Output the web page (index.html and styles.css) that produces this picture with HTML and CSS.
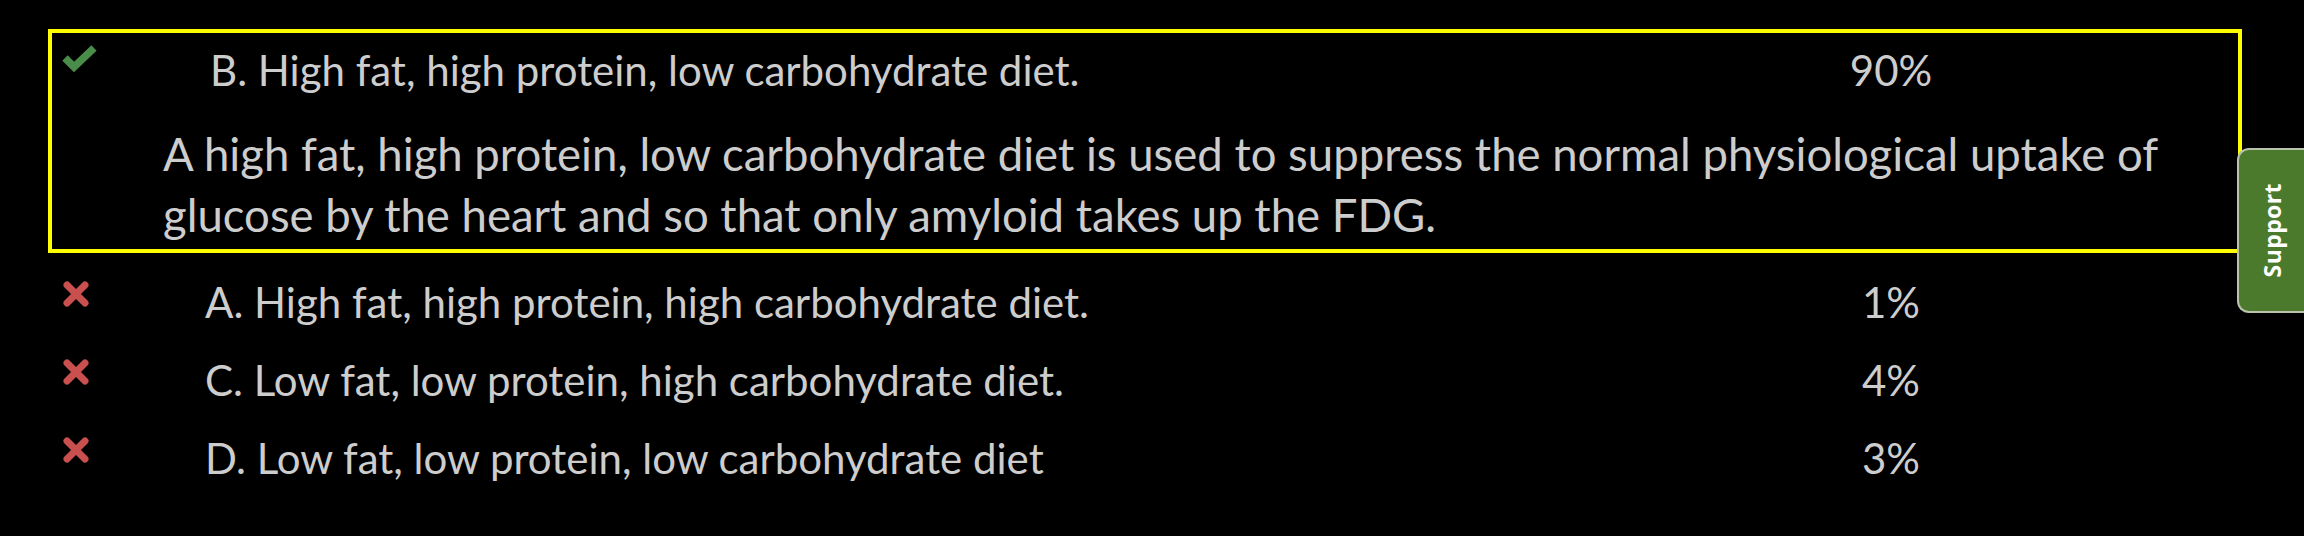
FILE: index.html
```html
<!DOCTYPE html>
<html lang="en">
<head>
<meta charset="utf-8">
<title>Answer review</title>
<link rel="stylesheet" href="styles.css">
</head>
<body>
<div class="page">
  <div class="answer answer--selected">
    <div class="row row--in-box">
      <span class="icon icon--check">
        <svg width="36" height="28" viewBox="0 0 36 28"><path d="M3 13 L12 22 L32 3" fill="none" stroke="#4a8c4a" stroke-width="7.5" stroke-linejoin="miter"/></svg>
      </span>
      <span class="opt">B.&nbsp;High fat, high protein, low carbohydrate diet.</span>
      <span class="pct">90%</span>
    </div>
    <p class="explain">A high fat, high protein, low carbohydrate diet is used to suppress the normal physiological uptake of glucose by the heart and so that only amyloid takes up the FDG.</p>
  </div>
  <div class="row row--first">
    <span class="icon icon--cross"><svg width="28" height="26" viewBox="0 0 28 26"><path d="M5 4 L23 22 M23 4 L5 22" stroke="#c9504f" stroke-width="7" stroke-linecap="round"/></svg></span>
    <span class="opt">A. High fat, high protein, high carbohydrate diet.</span>
    <span class="pct">1%</span>
  </div>
  <div class="row">
    <span class="icon icon--cross"><svg width="28" height="26" viewBox="0 0 28 26"><path d="M5 4 L23 22 M23 4 L5 22" stroke="#c9504f" stroke-width="7" stroke-linecap="round"/></svg></span>
    <span class="opt">C. Low fat, low protein, high carbohydrate diet.</span>
    <span class="pct">4%</span>
  </div>
  <div class="row">
    <span class="icon icon--cross"><svg width="28" height="26" viewBox="0 0 28 26"><path d="M5 4 L23 22 M23 4 L5 22" stroke="#c9504f" stroke-width="7" stroke-linecap="round"/></svg></span>
    <span class="opt">D. Low fat, low protein, low carbohydrate diet</span>
    <span class="pct">3%</span>
  </div>
</div>
<a class="support-tab" href="#"><span class="support-label">Support</span></a>
</body>
</html>
```
FILE: styles.css
```css
html, body {
  margin: 0;
  background: #000;
}
body {
  font-family: Lato, "Liberation Sans", sans-serif;
  font-size: 42px;
  color: #cdcdcd;
  overflow: hidden;
}
.page {
  padding: 29px 0 0 48px;
  width: 2194px;
}
.answer {
  border: 4px solid #ffff00;
  padding: 7px 0 4px 10px;
}
.row {
  display: grid;
  grid-template-columns: 143px 1626px 120px;
  align-items: center;
  height: 78px;
  padding-left: 14px;
}
.row--first {
  margin-top: 10px;
}
.row--in-box {
  grid-template-columns: 148px 1621px 120px;
  height: 60px;
  padding-left: 0;
}
.icon {
  display: flex;
  align-items: center;
}
.icon svg {
  display: block;
}
.icon--check {
  margin-top: -22px;
}
.icon--cross {
  margin-top: -16px;
}
.opt {
  white-space: nowrap;
}
.pct {
  text-align: center;
}
.explain {
  margin: 23px 0 0 101px;
  font-size: 45.5px;
  line-height: 61px;
  max-width: 2040px;
}
.support-tab {
  position: absolute;
  left: 2237px;
  top: 148px;
  width: 80px;
  height: 165px;
  box-sizing: border-box;
  background: #4b7a2c;
  border: 2px solid #b8c2ad;
  border-right: none;
  border-radius: 12px 0 0 12px;
  display: flex;
  align-items: center;
  padding-left: 18px;
  color: #fff;
  text-decoration: none;
}
.support-label {
  font-family: "Open Sans", sans-serif;
  font-weight: 700;
  font-size: 23px;
  line-height: 30px;
  letter-spacing: 0.4px;
  writing-mode: vertical-rl;
  transform: rotate(180deg);
}
```
